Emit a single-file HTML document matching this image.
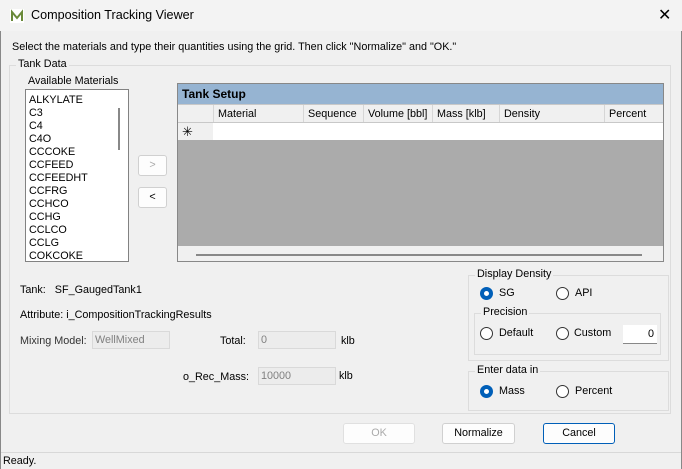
<!DOCTYPE html><html><head><style>
*{margin:0;padding:0;box-sizing:border-box}
body{width:682px;height:469px;overflow:hidden;background:#f0f0f0;font-family:"Liberation Sans",sans-serif;font-size:10.8px;color:#000;position:relative}
.a{position:absolute;white-space:nowrap}
.grp{position:absolute;border:1px solid #dcdcdc}
.lbl{position:absolute;background:#f0f0f0;padding:0 2px;top:-8px}
.rad{position:absolute;width:13px;height:13px;border:1px solid #333;border-radius:50%;background:#fff}
.rad.on{border:4px solid #005fb8;background:#fff}
.btn{position:absolute;border:1px solid #d0d0d0;border-radius:3px;background:#fdfdfd;text-align:center;line-height:19px}
.box{position:absolute;border:1px solid #d9d9d9;background:#ececec;color:#808080;padding-left:2px;line-height:17px}
.ch{position:absolute;top:0;height:18px;border-left:1px solid #d6d6d6;padding-left:4px;line-height:18px}
</style></head><body>
<div class="a" style="left:0;top:0;width:682px;height:31px;background:#f3f3f3"></div>
<svg class="a" style="left:10px;top:9px" width="14" height="14"><rect width="14" height="14" fill="#fff"/><path d="M2 12V3l5 6 5-6v9" stroke="#6a8a3a" stroke-width="2" fill="none"/></svg>
<div class="a" style="left:31px;top:8px;font-size:12.6px">Composition Tracking Viewer</div>
<div class="a" style="left:658px;top:5px;font-size:16px">✕</div>
<div class="a" style="left:12px;top:41px">Select the materials and type their quantities using the grid. Then click "Normalize" and "OK."</div>
<div class="grp" style="left:9px;top:65px;width:662px;height:349px"><div class="lbl" style="left:6px">Tank Data</div></div>
<div class="a" style="left:28px;top:75px">Available Materials</div>
<div class="a" style="left:25px;top:89px;width:104px;height:173px;background:#fff;border:1px solid #828282;line-height:13px;padding:4px 0 0 3px;color:#000">ALKYLATE<br>C3<br>C4<br>C4O<br>CCCOKE<br>CCFEED<br>CCFEEDHT<br>CCFRG<br>CCHCO<br>CCHG<br>CCLCO<br>CCLG<br>COKCOKE</div>
<div class="a" style="left:118px;top:108px;width:2px;height:42px;background:#888"></div>
<div class="btn" style="left:138px;top:155px;width:29px;height:21px;color:#aaa">&gt;</div>
<div class="btn" style="left:138px;top:187px;width:29px;height:21px">&lt;</div>
<div class="a" style="left:177px;top:83px;width:487px;height:179px;border:1px solid #888;background:#f0f0f0">
<div class="a" style="left:0;top:0;width:485px;height:20px;background:#96b4d2;font-weight:bold;font-size:12px;padding:3px 4px">Tank Setup</div>
<div class="a" style="left:0;top:20px;width:485px;height:18px;background:#f0f0f0;border-top:1px solid #c8c8c8">
<div class="ch" style="left:35px;width:90px">Material</div><div class="ch" style="left:125px;width:60px">Sequence</div><div class="ch" style="left:185px;width:69px">Volume [bbl]</div><div class="ch" style="left:254px;width:67px">Mass [klb]</div><div class="ch" style="left:321px;width:105px">Density</div><div class="ch" style="left:426px;width:60px">Percent</div></div>
<div class="a" style="left:0;top:38px;width:485px;height:18px;background:#fff;border-top:1px solid #c8c8c8"><div class="a" style="left:0;top:0;width:35px;height:17px;background:#f0f0f0;padding-left:4px;font-size:13px;line-height:17px">✳</div></div>
<div class="a" style="left:0;top:56px;width:485px;height:106px;background:#ababab"></div>
<div class="a" style="left:18px;top:170px;width:446px;height:2px;background:#888"></div>
</div>
<div class="a" style="left:20px;top:284px">Tank:&nbsp;&nbsp; SF_GaugedTank1</div>
<div class="a" style="left:20px;top:309px">Attribute: i_CompositionTrackingResults</div>
<div class="a" style="left:20px;top:335px;color:#333">Mixing Model:</div>
<div class="box" style="left:92px;top:331px;width:78px;height:18px">WellMixed</div>
<div class="a" style="left:220px;top:335px">Total:</div>
<div class="box" style="left:258px;top:331px;width:78px;height:18px">0</div>
<div class="a" style="left:341px;top:335px">klb</div>
<div class="a" style="left:183px;top:371px">o_Rec_Mass:</div>
<div class="box" style="left:258px;top:367px;width:78px;height:18px">10000</div>
<div class="a" style="left:339px;top:370px">klb</div>
<div class="grp" style="left:468px;top:275px;width:201px;height:86px"><div class="lbl" style="left:6px">Display Density</div></div>
<div class="rad on" style="left:480px;top:287px"></div><div class="a" style="left:499px;top:287px">SG</div>
<div class="rad" style="left:556px;top:287px"></div><div class="a" style="left:575px;top:287px">API</div>
<div class="grp" style="left:474px;top:313px;width:187px;height:42px"><div class="lbl" style="left:6px">Precision</div></div>
<div class="rad" style="left:480px;top:327px"></div><div class="a" style="left:499px;top:327px">Default</div>
<div class="rad" style="left:556px;top:327px"></div><div class="a" style="left:574px;top:327px">Custom</div>
<div class="a" style="left:623px;top:325px;width:34px;height:19px;background:#fff;border-bottom:1px solid #888;text-align:right;padding-right:3px;line-height:18px">0</div>
<div class="grp" style="left:468px;top:371px;width:201px;height:40px"><div class="lbl" style="left:6px">Enter data in</div></div>
<div class="rad on" style="left:480px;top:385px"></div><div class="a" style="left:499px;top:385px">Mass</div>
<div class="rad" style="left:556px;top:385px"></div><div class="a" style="left:575px;top:385px">Percent</div>
<div class="btn" style="left:343px;top:423px;width:72px;height:21px;color:#aaa;border-color:#e0e0e0">OK</div>
<div class="btn" style="left:442px;top:423px;width:73px;height:21px">Normalize</div>
<div class="btn" style="left:543px;top:423px;width:72px;height:21px;border-color:#005fb8">Cancel</div>
<div class="a" style="left:0;top:452px;width:682px;height:1px;background:#d8d8d8"></div>
<div class="a" style="left:3px;top:455px">Ready.</div>
<div class="a" style="left:0;top:31px;width:1px;height:438px;background:#888"></div>
<div class="a" style="left:681px;top:31px;width:1px;height:438px;background:#888"></div>
</body></html>
